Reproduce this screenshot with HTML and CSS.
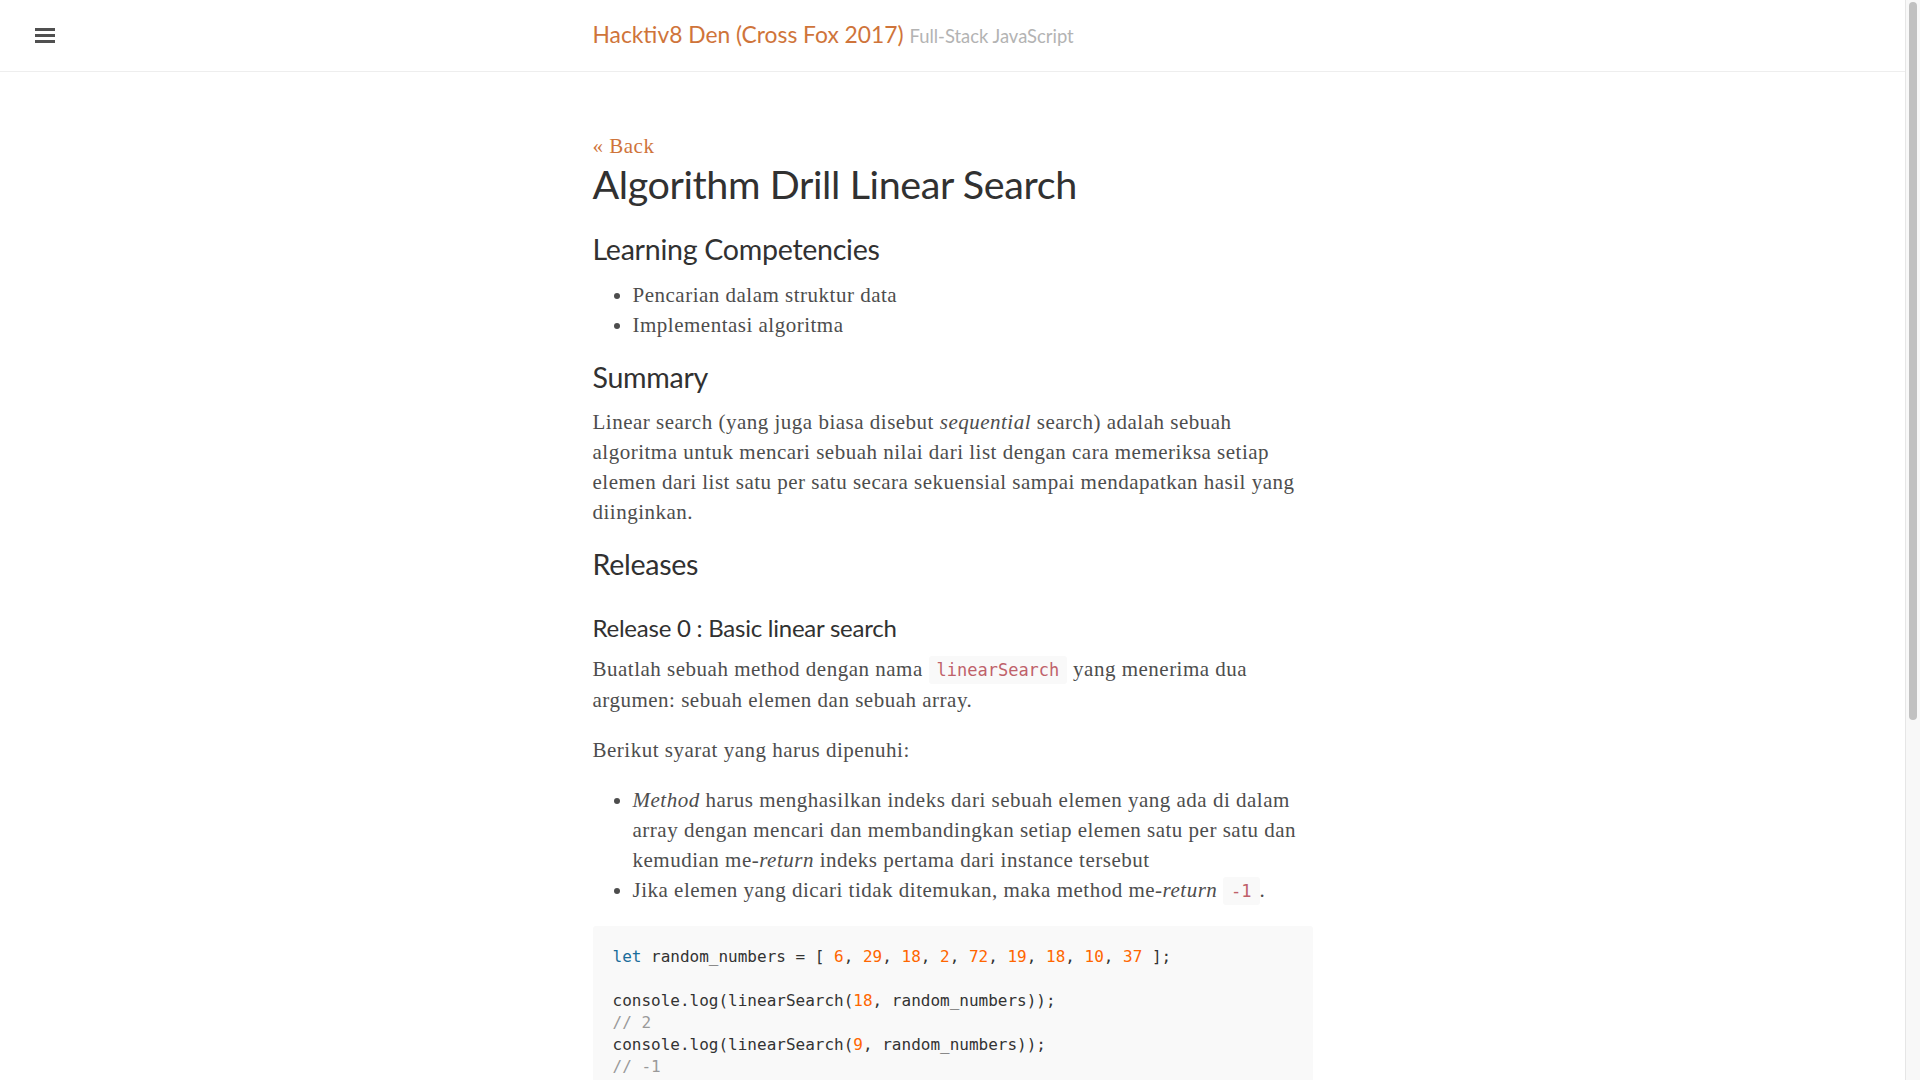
FILE: index.html
```html
<!DOCTYPE html>
<html lang="id">
<head>
<meta charset="utf-8">
<title>Algorithm Drill Linear Search · Hacktiv8 Den</title>
<link rel="stylesheet" href="styles.css">
</head>
<body>
<div class="page">
  <div class="wrap">
    <button class="sidebar-toggle" aria-label="Menu">
      <span class="bar"></span><span class="bar"></span><span class="bar"></span>
    </button>
    <header class="masthead">
      <div class="container">
        <h3 class="masthead-title">
          <a href="#">Hacktiv8 Den (Cross Fox 2017)</a>
          <small>Full-Stack JavaScript</small>
        </h3>
      </div>
    </header>
    <main class="container content">
      <p class="back"><a href="#">« Back</a></p>
      <h1 class="page-title">Algorithm Drill Linear Search</h1>

      <h2>Learning Competencies</h2>
      <ul>
        <li>Pencarian dalam struktur data</li>
        <li>Implementasi algoritma</li>
      </ul>

      <h2>Summary</h2>
      <p>Linear search (yang juga biasa disebut <em>sequential</em> search) adalah sebuah algoritma untuk mencari sebuah nilai dari list dengan cara memeriksa setiap elemen dari list satu per satu secara sekuensial sampai mendapatkan hasil yang diinginkan.</p>

      <h2>Releases</h2>

      <h3>Release 0 : Basic linear search</h3>
      <p>Buatlah sebuah method dengan nama <code>linearSearch</code> yang menerima dua argumen: sebuah elemen dan sebuah array.</p>

      <p>Berikut syarat yang harus dipenuhi:</p>
      <ul>
        <li><em>Method</em> harus menghasilkan indeks dari sebuah elemen yang ada di dalam array dengan mencari dan membandingkan setiap elemen satu per satu dan kemudian me-<em>return</em> indeks pertama dari instance tersebut</li>
        <li>Jika elemen yang dicari tidak ditemukan, maka method me-<em>return</em> <code>-1</code>.</li>
      </ul>

<pre class="highlight"><code><span class="k">let</span> random_numbers = [ <span class="m">6</span>, <span class="m">29</span>, <span class="m">18</span>, <span class="m">2</span>, <span class="m">72</span>, <span class="m">19</span>, <span class="m">18</span>, <span class="m">10</span>, <span class="m">37</span> ];

console.log(linearSearch(<span class="m">18</span>, random_numbers));
<span class="c">// 2</span>
console.log(linearSearch(<span class="m">9</span>, random_numbers));
<span class="c">// -1</span>
</code></pre>

      <h3>Release 1 : Global linear search</h3>
      <p>Buatlah sebuah method dengan nama <code>globalLinearSearch</code> yang menerima dua argumen: sebuah elemen dan sebuah array.</p>
      <p>Method tersebut harus menghasilkan sebuah array yang berisi semua indeks dari elemen yang dicari.</p>
    </main>
  </div>
  <div class="scrollbar" aria-hidden="true"><div class="thumb"></div></div>
</div>
</body>
</html>
```
FILE: styles.css
```css
html {
  font-size: 20px;
}
body {
  margin: 0;
  color: #4d4d4d;
  background: #fff;
  font-family: "Liberation Serif", "DejaVu Serif", serif;
  font-size: 21px;
  letter-spacing: 0.5px;
  line-height: 30px;
}
a {
  color: #cf743a;
  text-decoration: none;
}
.page {
  display: flex;
  align-items: flex-start;
}
.wrap {
  position: relative;
  flex: 1;
  min-width: 0;
}
.scrollbar {
  flex: none;
  position: sticky;
  top: 0;
  width: 15px;
  height: 100vh;
  box-sizing: border-box;
  padding: 2px 3px 0 3px;
  background: #f8f8f8;
  border-left: 1px solid #e6e6e6;
}
.thumb {
  height: 718px;
  background: #c1c1c1;
  border-radius: 4px;
}
.sidebar-toggle {
  position: absolute;
  top: 28px;
  left: 35px;
  width: 20px;
  height: 15px;
  padding: 0;
  border: 0;
  background: transparent;
  display: flex;
  flex-direction: column;
  justify-content: space-between;
  cursor: pointer;
}
.sidebar-toggle .bar {
  display: block;
  height: 3px;
  width: 20px;
  background: #505050;
}
.container {
  max-width: 720px;
  padding: 0 20px;
  margin: 0 auto;
}
.masthead {
  border-bottom: 1px solid #eee;
  height: 72px;
  box-sizing: border-box;
  padding-top: 19px;
}
.masthead-title {
  margin: 0;
  font-family: "Lato", "PT Sans", sans-serif;
  font-weight: 400;
  font-size: 22.8px;
  line-height: 30px;
  letter-spacing: 0;
  color: #505050;
}
.masthead-title a {
  color: #cf743a;
}
.masthead-title small {
  font-size: 18.4px;
  color: #b3b3b3;
}
.content {
  padding-top: 59px;
  padding-bottom: 300px;
}
.back {
  margin: 0;
}
h1, h2, h3 {
  font-family: "Lato", "PT Sans", sans-serif;
  font-weight: 400;
  color: #313131;
  line-height: 1.25;
  margin-top: 20px;
  margin-bottom: 12px;
  letter-spacing: -0.01em;
}
.page-title {
  font-size: 39.5px;
  margin-top: -2.5px;
  margin-bottom: 24px;
}
h2 {
  font-size: 28.6px;
}
h3 {
  font-size: 24px;
  margin-top: 29.5px;
  margin-bottom: 11px;
}
p {
  margin: 0 0 20px;
}
ul {
  margin: 0 0 20px;
  padding-left: 40px;
}
em {
  font-style: italic;
}
code {
  font-family: "DejaVu Sans Mono", "Liberation Mono", monospace;
  font-size: 17px;
  letter-spacing: 0;
  padding: 4px 8px;
  color: #bf616a;
  background: #f9f9f9;
  border-radius: 3px;
}
pre {
  margin: 0 0 20px;
  padding: 20px;
  background: #f9f9f9;
  border-radius: 3px;
  font-family: "DejaVu Sans Mono", "Liberation Mono", monospace;
  font-size: 16px;
  line-height: 22px;
  letter-spacing: 0;
  white-space: pre;
  overflow: auto;
}
pre code {
  padding: 0;
  color: #333;
  background: transparent;
  font-size: inherit;
}
.k { color: #1a6d9b; }
.m { color: #f60; }
.c { color: #999; }
```
